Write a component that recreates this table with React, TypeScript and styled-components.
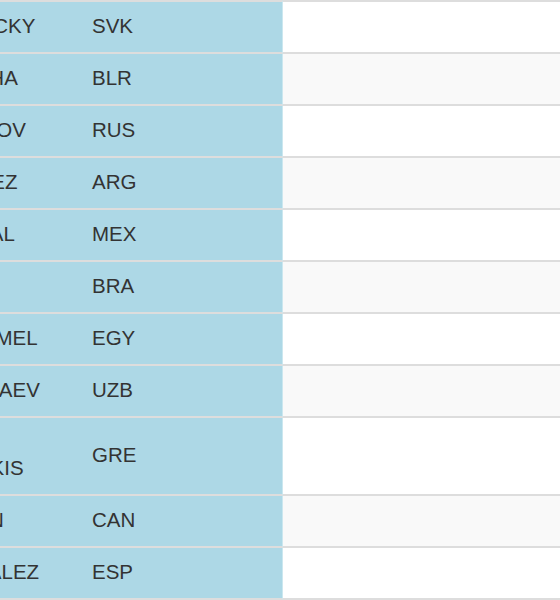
import React from 'react'
import styled, { createGlobalStyle } from 'styled-components'

type Player = {
  name: string,
  nation: string,
}

const players: Player[] = [
  { name: 'DOMINIK ZELENICKY', nation: 'SVK' },
  { name: 'MAKSIM IVASHCHA', nation: 'BLR' },
  { name: 'PAVEL KHACHANOV', nation: 'RUS' },
  { name: 'RICARDO ALVAREZ', nation: 'ARG' },
  { name: 'RODRIGO A. VIDAL', nation: 'MEX' },
  { name: 'THIAGO WILD', nation: 'BRA' },
  { name: 'HASSAN AMR KAMEL', nation: 'EGY' },
  { name: 'BOBUR AKHMEDIAEV', nation: 'UZB' },
  { name: 'STEFANOS CHRISTODOULAKIS', nation: 'GRE' },
  { name: 'SAMUEL SIGOUIN', nation: 'CAN' },
  { name: 'ALBERTO GONZALEZ', nation: 'ESP' },
]

const GlobalStyle = createGlobalStyle`
  body {
    margin: 0;
    background: #fff;
    font-family: "Liberation Sans", Arial, sans-serif;
  }
`

// the table is scrolled sideways, so the name column is cut on the left
const Viewport = styled.div`
  width: 560px;
  height: 600px;
  overflow: hidden;
`

const Table = styled.table`
  border-collapse: separate;
  border-spacing: 0;
  table-layout: fixed;
  width: 1000px;
  margin-left: -184px;
  font-size: 20.5px;
  line-height: 26px;
  color: #333;
`

const Row = styled.tr`
  &:nth-child(even) td {
    background: #f9f9f9;
  }

  &:first-child td {
    border-top: 2px solid #ddd;
  }
`

const Cell = styled.td<{ $fixed?: boolean }>`
  padding: 11px 12px 13px;
  border-bottom: 2px solid #ddd;
  vertical-align: middle;
  text-align: left;
  background: #fff;

  ${Row} &&& {
    background: ${p => p.$fixed ? '#add8e6' : undefined};
  }
`

const NationCell = styled(Cell)`
  border-right: 1px solid #cbe7ef;
`

export default function App() {
  return (
    <Viewport>
      <GlobalStyle />
      <Table>
        <colgroup>
          <col style={{ width: 264 }} />
          <col style={{ width: 203 }} />
          <col />
          <col />
        </colgroup>
        <tbody>
          {players.map(player => (
            <Row key={player.nation}>
              <Cell $fixed>{player.name}</Cell>
              <NationCell $fixed>{player.nation}</NationCell>
              <Cell></Cell>
              <Cell></Cell>
            </Row>
          ))}
        </tbody>
      </Table>
    </Viewport>
  )
}
